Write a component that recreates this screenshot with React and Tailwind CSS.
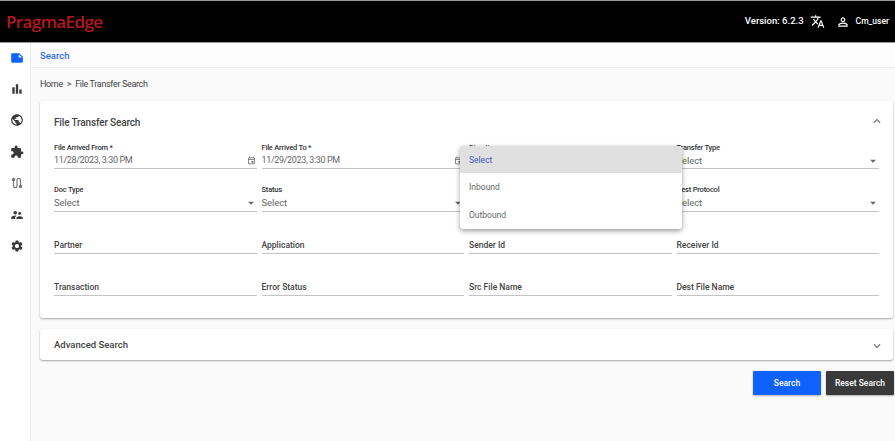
import {
  MdNote, MdBarChart, MdPublic, MdExtension, MdRoute, MdSupervisorAccount, MdSettings,
  MdTranslate, MdPersonOutline, MdOutlineEvent, MdArrowDropDown, MdExpandLess, MdExpandMore,
} from 'react-icons/md'

const navIcons = [MdBarChart, MdPublic, MdExtension, MdRoute, MdSupervisorAccount, MdSettings]

function Field({ label, value, icon, height }) {
  const isDate = icon === 'date'
  return (
    <div className={`flex flex-col border-b border-[#c4c4c4] ${height}`}>
      <span className="h-[11px] text-[7.5px] leading-[11px] font-medium tracking-[-0.2px] text-[#333]">{label}</span>
      <div className="flex items-center justify-between mt-[1px] h-[13px]">
        <span className={isDate ? 'text-[9px] leading-[13px] tracking-[-0.35px] text-[#666]' : 'text-[9.5px] leading-[13px] tracking-[-0.1px] text-[#666]'}>{value}</span>
        {isDate && <MdOutlineEvent className="text-[9px] text-[#666] mr-[1px]" />}
        {icon === 'select' && <MdArrowDropDown className="text-[14px] text-[#666] mr-[-1px]" />}
      </div>
    </div>
  )
}

function TextField({ label }) {
  return (
    <div className="h-[21px] pt-[6px] border-b border-[#c4c4c4]">
      <span className="block text-[8.5px] leading-[12px] font-medium text-[#444]">{label}</span>
    </div>
  )
}

export default function App() {
  return (
    <div className="w-[895px] h-[441px] overflow-hidden flex flex-col bg-[#fafafa] font-['Roboto',sans-serif]">
      <header className="h-[43px] shrink-0 bg-black border-t border-[#9a9a9a] border-b flex items-center justify-between pl-[6px] pr-[6px]">
        <span className="text-[#b3171d] text-[17px] leading-none tracking-[-0.6px] font-semibold font-['Open_Sans',sans-serif]">PragmaEdge</span>
        <div className="flex items-center text-white">
          <span className="text-[9.5px] font-medium">Version: 6.2.3</span>
          <MdTranslate className="text-[15px] ml-[6px]" />
          <MdPersonOutline className="text-[14px] ml-[11px]" />
          <span className="text-[8.5px] font-medium ml-[6px]">Cm_user</span>
        </div>
      </header>

      <div className="flex flex-1 min-h-0">
        <aside className="w-[31px] shrink-0 bg-white border-r border-[#ececec] flex flex-col items-center pt-[8px] pl-[3px]">
          <MdNote className="text-[14px] text-[#0f62fe]" />
          <div className="flex flex-col items-center gap-[17.4px] mt-[17px]">
            {navIcons.map((Icon, i) => (
              <Icon key={i} className={Icon === MdRoute ? 'text-[14px] text-[#777]' : 'text-[14px] text-[#3a3a3a]'} />
            ))}
          </div>
        </aside>

        <main className="flex-1 min-w-0">
          <div className="h-[25px] bg-[#fcfcfc] border-b border-[#ececec] pl-[9px] pt-[2px] flex items-center text-[9.5px] font-medium text-[#2f6bf0]">
            Search
          </div>
          <div className="pl-[9px] h-[33px] pt-[1px] flex items-center text-[9px] tracking-[-0.35px] text-[#444]">
            Home <span className="mx-[4px]">&gt;</span> File Transfer Search
          </div>

          <section className="relative ml-[9px] mr-[2px] h-[217px] bg-white rounded-[3px] shadow-[0_1px_2px_rgba(0,0,0,0.35)] px-[14px]">
            <div className="h-[42px] flex items-center justify-between pt-[1px]">
              <h2 className="text-[10px] tracking-[-0.15px] font-medium text-[#444]">File Transfer Search</h2>
              <MdExpandLess className="text-[14px] text-[#666] mr-[-5px] mb-[3px]" />
            </div>

            <div className="grid grid-cols-4 gap-x-[5px]">
              <Field label="File Arrived From *" value="11/28/2023, 3:30 PM" icon="date" height="h-[27px] mt-[-1px]" />
              <Field label="File Arrived To *" value="11/29/2023, 3:30 PM" icon="date" height="h-[27px] mt-[-1px]" />
              <Field label="Direction" height="h-[27px] mt-[-1px]" />
              <Field label="Transfer Type" value="Select" icon="select" height="h-[27px] mt-[-1px]" />
            </div>
            <div className="grid grid-cols-4 gap-x-[5px] mt-[15px]">
              <Field label="Doc Type" value="Select" icon="select" height="h-[28px]" />
              <Field label="Status" value="Select" icon="select" height="h-[28px]" />
              <Field height="h-[28px]" />
              <Field label="Dest Protocol" value="Select" icon="select" height="h-[28px]" />
            </div>
            <div className="grid grid-cols-4 gap-x-[5px] mt-[21px]">
              <TextField label="Partner" />
              <TextField label="Application" />
              <TextField label="Sender Id" />
              <TextField label="Receiver Id" />
            </div>
            <div className="grid grid-cols-4 gap-x-[5px] mt-[21px]">
              <TextField label="Transaction" />
              <TextField label="Error Status" />
              <TextField label="Src File Name" />
              <TextField label="Dest File Name" />
            </div>

            <div className="absolute left-[420px] top-[45px] w-[222px] h-[83px] bg-white rounded-[3px] shadow-[0_2px_5px_rgba(0,0,0,0.4)] text-[8.5px] flex flex-col">
              <div className="h-[27px] pt-[1px] bg-[#e0e0e0] pl-[9px] flex items-center text-[#4a55c0] rounded-t-[3px]">Select</div>
              <div className="h-[28px] pl-[9px] flex items-center text-[#666]">Inbound</div>
              <div className="h-[28px] pl-[9px] flex items-center text-[#666]">Outbound</div>
            </div>
          </section>

          <section className="ml-[9px] mr-[2px] mt-[11px] h-[31px] bg-white rounded-[3px] shadow-[0_1px_2px_rgba(0,0,0,0.35)] pl-[14px] pr-[9px] pt-[1px] flex items-center justify-between">
            <h2 className="text-[9.5px] font-medium text-[#444]">Advanced Search</h2>
            <MdExpandMore className="text-[14px] text-[#666] mt-[2px]" />
          </section>

          <div className="flex justify-end gap-[5px] mt-[11px] mr-[1px] text-[8.5px] font-medium text-white">
            <button className="w-[68px] h-[24px] bg-[#0f62fe] rounded-[1px] shadow-[0_1px_2px_rgba(0,0,0,0.3)]">Search</button>
            <button className="w-[68px] h-[24px] bg-[#393939] rounded-[1px] shadow-[0_1px_2px_rgba(0,0,0,0.3)]">Reset Search</button>
          </div>
        </main>
      </div>
    </div>
  )
}
